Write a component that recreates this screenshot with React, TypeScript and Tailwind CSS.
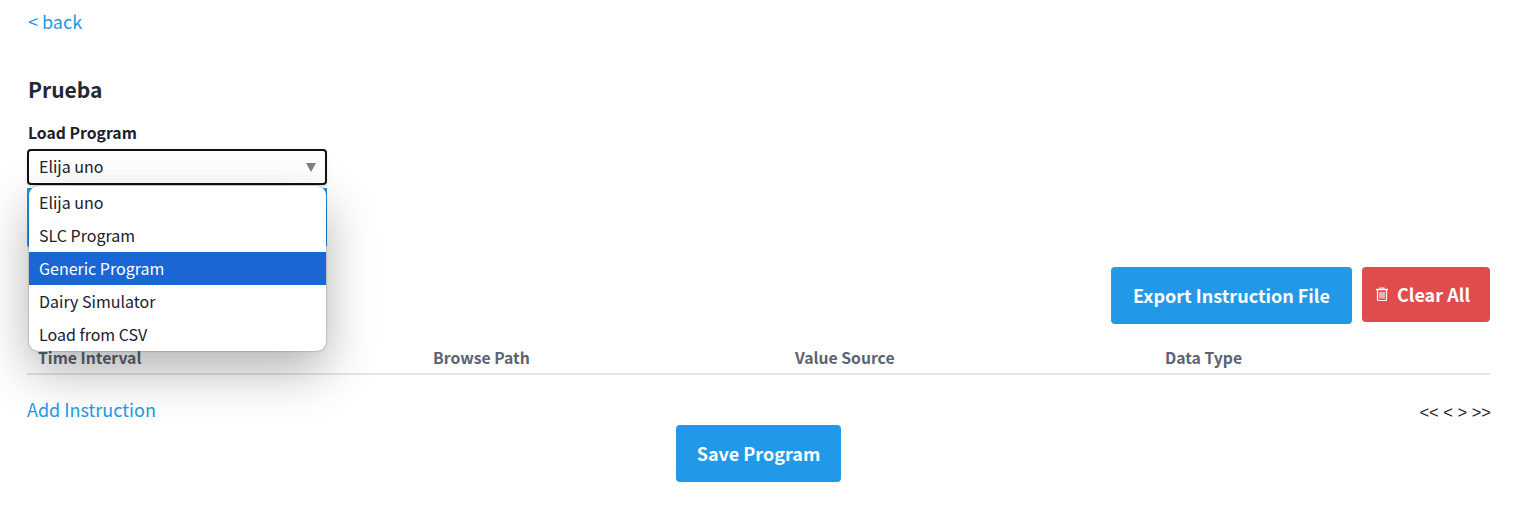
const options = ["Elija uno", "SLC Program", "Generic Program", "Dairy Simulator", "Load from CSV"];
const columns = [
  { label: "Time Interval", width: "w-[395px]" },
  { label: "Browse Path", width: "w-[362px]" },
  { label: "Value Source", width: "w-[370px]" },
  { label: "Data Type", width: "w-[200px]" },
];

function TrashIcon() {
  return (
    <svg width="12" height="14" viewBox="0 0 12 14" fill="none" stroke="currentColor" className="shrink-0">
      <path d="M0 2.5h12" strokeWidth="1.4" />
      <path d="M4 2.5V1h4v1.5" strokeWidth="1.1" />
      <path d="M1.5 3v9.5a1 1 0 0 0 1 1h7a1 1 0 0 0 1-1V3" strokeWidth="1.2" />
      <path d="M4 5v6.5M6 5v6.5M8 5v6.5" strokeWidth="1.1" />
    </svg>
  );
}

export default function App() {
  return (
    <div className="min-h-[509px] bg-white pt-[9px] pr-[33px] pl-[27px] font-['Noto_Sans_CJK_JP','Noto_Sans',sans-serif] text-[#1a202c]">
      <a className="block h-6 pl-px text-lg leading-6 text-[#2299e8]">&lt; back</a>

      <h2 className="mt-[42px] ml-px h-[28px] text-[21px] leading-[28px] font-bold text-[#22292f]">Prueba</h2>

      <div className="relative mt-[18px] w-[300px]">
        <label className="block h-[24px] pl-px text-[15.75px] leading-[24px] font-bold">Load Program</label>
        <div className="mt-[4px] flex h-[36px] items-center justify-between rounded-[4px] border-2 border-[#111] bg-white pr-[9px] pb-[2px] pl-[10px] text-base shadow-sm">
          <span>Elija uno</span>
          <svg width="10" height="9" viewBox="0 0 10 9" className="mt-[2px] text-[#808080]">
            <path d="M0 0h10L5 9z" fill="currentColor" />
          </svg>
        </div>
        <div className="mt-[3px] h-[60px] rounded-b-[4px] bg-[#2299e8]" />
        <ul className="absolute top-[65px] left-[2px] z-10 w-[297px] overflow-hidden rounded-[9px] bg-white text-base shadow-[0_0_2px_rgba(0,0,0,0.45),0_20px_50px_rgba(0,0,0,0.3)]">
          {options.map((o) => (
            <li
              key={o}
              className={`flex h-[33px] items-center pb-[2px] pl-[10px] ${o === "Generic Program" ? "bg-[#1a66d4] text-white" : ""}`}
            >
              {o}
            </li>
          ))}
        </ul>
      </div>

      <div className="mt-[19px] flex items-start justify-end gap-[10px]">
        <button className="h-[57px] w-[241px] rounded-[4px] bg-[#2299e8] pb-[2px] text-lg font-bold text-white">
          Export Instruction File
        </button>
        <button className="flex h-[55px] w-[128px] items-center justify-center gap-[9px] rounded-[4px] bg-[#e04c4c] pr-[6px] pb-[2px] text-lg font-bold text-white">
          <TrashIcon />
          Clear All
        </button>
      </div>

      <div className="mt-[22px] flex h-[29px] items-start border-b-2 border-[#e2e6ea] pl-[11px] text-[15.75px] leading-[24px] font-bold text-[#5a6472]">
        {columns.map((c) => (
          <div key={c.label} className={c.width}>
            {c.label}
          </div>
        ))}
      </div>

      <div className="mt-[20px] flex h-[28px] items-center justify-between">
        <a className="text-lg text-[#2299e8]">Add Instruction</a>
        <span className="mr-[-1px] pt-[6px] font-['Liberation_Sans',sans-serif] text-[16.5px] text-[#1a202c]">&lt;&lt; &lt; &gt; &gt;&gt;</span>
      </div>

      <div className="mt-[2px] flex justify-center">
        <button className="h-[57px] w-[165px] rounded-[4px] bg-[#2299e8] pb-[2px] text-lg font-bold text-white">Save Program</button>
      </div>
    </div>
  );
}
